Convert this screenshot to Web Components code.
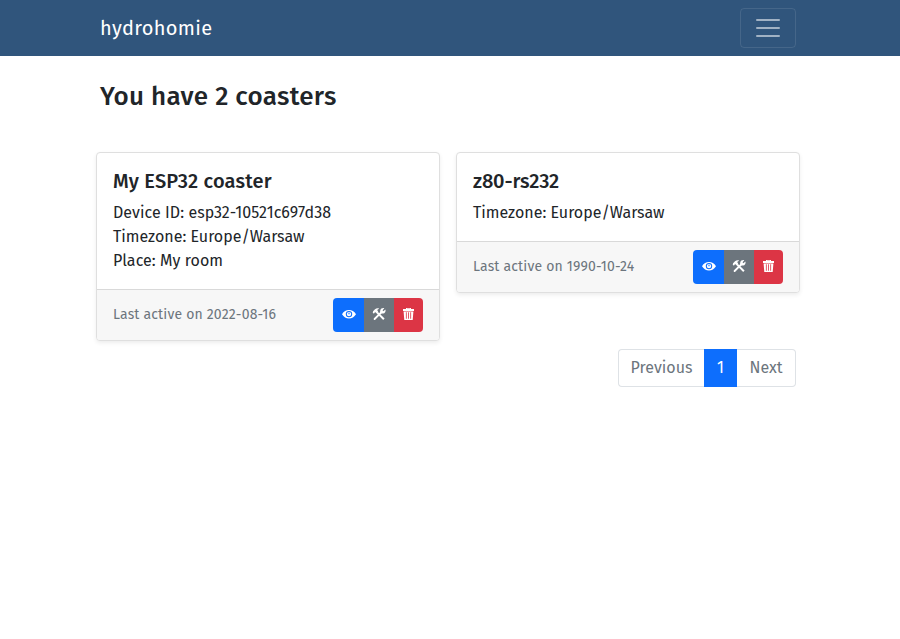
<!DOCTYPE html>
<html lang="en">
<head>
<meta charset="utf-8">
<title>hydrohomie</title>
<style>
body { margin: 0; background: #fff; color: #212529; font: 16px/24px "Fira Sans", "Noto Sans", "Open Sans", sans-serif; }
main { display: block; width: 704px; margin: 0 auto 0 96px; }
h1 { margin: 25px 4px 39px; font-size: 26px; line-height: 32px; font-weight: 500; letter-spacing: .28px; }
.grid { display: grid; grid-template-columns: 344px 344px; gap: 16px; align-items: start; }
.wide { letter-spacing: .18px; }
.loose { letter-spacing: .06px; }
.tight { letter-spacing: -.1px; }
page-nav { margin: 8px 4px 0 auto; }
</style>
</head>
<body>
<top-bar>hydrohomie</top-bar>
<main>
  <h1>You have 2 coasters</h1>
  <div class="grid">
    <coaster-card>
      <span slot="title" class="wide">My ESP32 coaster</span>
      <div class="loose">Device ID: esp32-10521c697d38</div>
      <div>Timezone: Europe/Warsaw</div>
      <div class="loose">Place: My room</div>
      <span slot="active">Last active on 2022-08-16</span>
    </coaster-card>
    <coaster-card>
      <span slot="title" class="tight">z80-rs232</span>
      <div>Timezone: Europe/Warsaw</div>
      <span slot="active">Last active on 1990-10-24</span>
    </coaster-card>
  </div>
  <page-nav></page-nav>
</main>
<script>
function define(name, html) {
  const template = document.createElement('template');
  template.innerHTML = html;
  customElements.define(name, class extends HTMLElement {
    constructor() {
      super();
      this.attachShadow({ mode: 'open' }).append(template.content.cloneNode(true));
    }
  });
}

define('top-bar', `
<style>
:host { display: flex; box-sizing: border-box; height: 56px; padding: 8px 104px 8px 100px; align-items: center; justify-content: space-between; background: #30557c; color: #fff; font-size: 20px; line-height: 30px; letter-spacing: .32px; }
button { box-sizing: border-box; width: 56px; height: 40px; padding: 0; border: 1px solid rgba(255,255,255,.1); border-radius: 4px; background: none; }
svg { display: block; margin: auto; }
</style>
<slot></slot>
<button aria-label="Menu"><svg width="30" height="30" viewBox="0 0 30 30"><path d="M4 7h22M4 15h22M4 23h22" stroke="#fff" stroke-opacity=".55" stroke-width="2" stroke-linecap="round"/></svg></button>`);

define('action-buttons', `
<style>
:host { display: flex; height: 34px; border-radius: 4px; overflow: hidden; }
button { display: flex; align-items: center; justify-content: center; width: 30px; padding: 0 0 2px; border: 0; color: #fff; background: #6c757d; }
.view { width: 31px; background: #0d6efd; }
.delete { width: 29px; background: #dc3545; }
</style>
<button class="view" aria-label="View"><svg width="14" height="14" viewBox="0 0 14 14"><path fill="currentColor" fill-rule="evenodd" d="M0 7.200C1.700 4.400 4.200 3 7 3S12.300 4.400 14 7.200C12.300 10 9.800 11.400 7 11.400S1.700 10 0 7.200ZM7 3.900a3.200 3.200 0 1 0 0 6.400a3.200 3.200 0 0 0 0-6.400Z"/><circle cx="7" cy="7.100" r="2.200" fill="currentColor"/><path d="M7 7.300V5.700" stroke="#0d6efd" stroke-width="1.100"/></svg></button>
<button class="tools" aria-label="Configure"><svg width="14" height="14" viewBox="0 0 14 14"><g stroke="currentColor" fill="none"><path d="M2.600 12L10 4.600" stroke-width="1.900" stroke-linecap="round"/><path d="M5 5.400L11.900 12.300" stroke-width="2"/></g><path fill="currentColor" d="M12.300 1.200L10.500 3.300L11.300 4.200L13.500 2.400C14 4.600 12.800 6.600 10.900 6.500L8.900 6.400L8 5.400L8.300 3.300C8.700 1.600 10.500 .8 12.300 1.200ZM.7 5.600L1.100 4.200L3 2.200C4.200 1.100 5.600 .9 7.200 1.400L5.200 2.900L6.200 4.700L4.400 6.300L3.100 5.100L1.900 6.700Z"/></svg></button>
<button class="delete" aria-label="Delete"><svg width="11" height="14" viewBox="0 0 11 14"><path fill="currentColor" fill-rule="evenodd" d="M3 1h5v1h3v2H0V2h3ZM4 1.700V2h3v-.3ZM.6 4.500h9.800L9.700 13H1.300ZM2.900 5.300v6.500h.8V5.300ZM5.100 5.300v6.500h.8V5.300ZM7.300 5.300v6.500h.8V5.300Z"/></svg></button>`);

define('coaster-card', `
<style>
:host { display: block; border: 1px solid #dfdfdf; border-radius: 4px; background: #fff; box-shadow: 0 2px 4px rgba(0,0,0,.075); }
.body { padding: 16px; }
h2 { margin: 0 0 8px; font-size: 20px; line-height: 24px; font-weight: 500; }
footer { display: flex; align-items: center; justify-content: space-between; padding: 8px 16px; border-top: 1px solid #d9d9d9; border-radius: 0 0 3px 3px; background: #f7f7f7; color: #6c757d; font-size: 14px; line-height: 21px; letter-spacing: .17px; }
.active { padding-bottom: 2px; }
</style>
<div class="body"><h2><slot name="title"></slot></h2><slot></slot></div>
<footer><div class="active"><slot name="active"></slot></div><action-buttons></action-buttons></footer>`);

define('page-nav', `
<style>
:host { display: flex; box-sizing: border-box; width: 178px; height: 38px; color: #6c757d; }
span { display: flex; box-sizing: border-box; align-items: center; justify-content: center; border: 1px solid #dee2e6; }
.previous { width: 86px; border-right: 0; border-radius: 4px 0 0 4px; }
.current { width: 33px; border-color: #0d6efd; background: #0d6efd; color: #fff; }
.next { width: 59px; border-left: 0; border-radius: 0 4px 4px 0; }
</style>
<span class="previous">Previous</span><span class="current">1</span><span class="next">Next</span>`);
</script>
</body>
</html>
